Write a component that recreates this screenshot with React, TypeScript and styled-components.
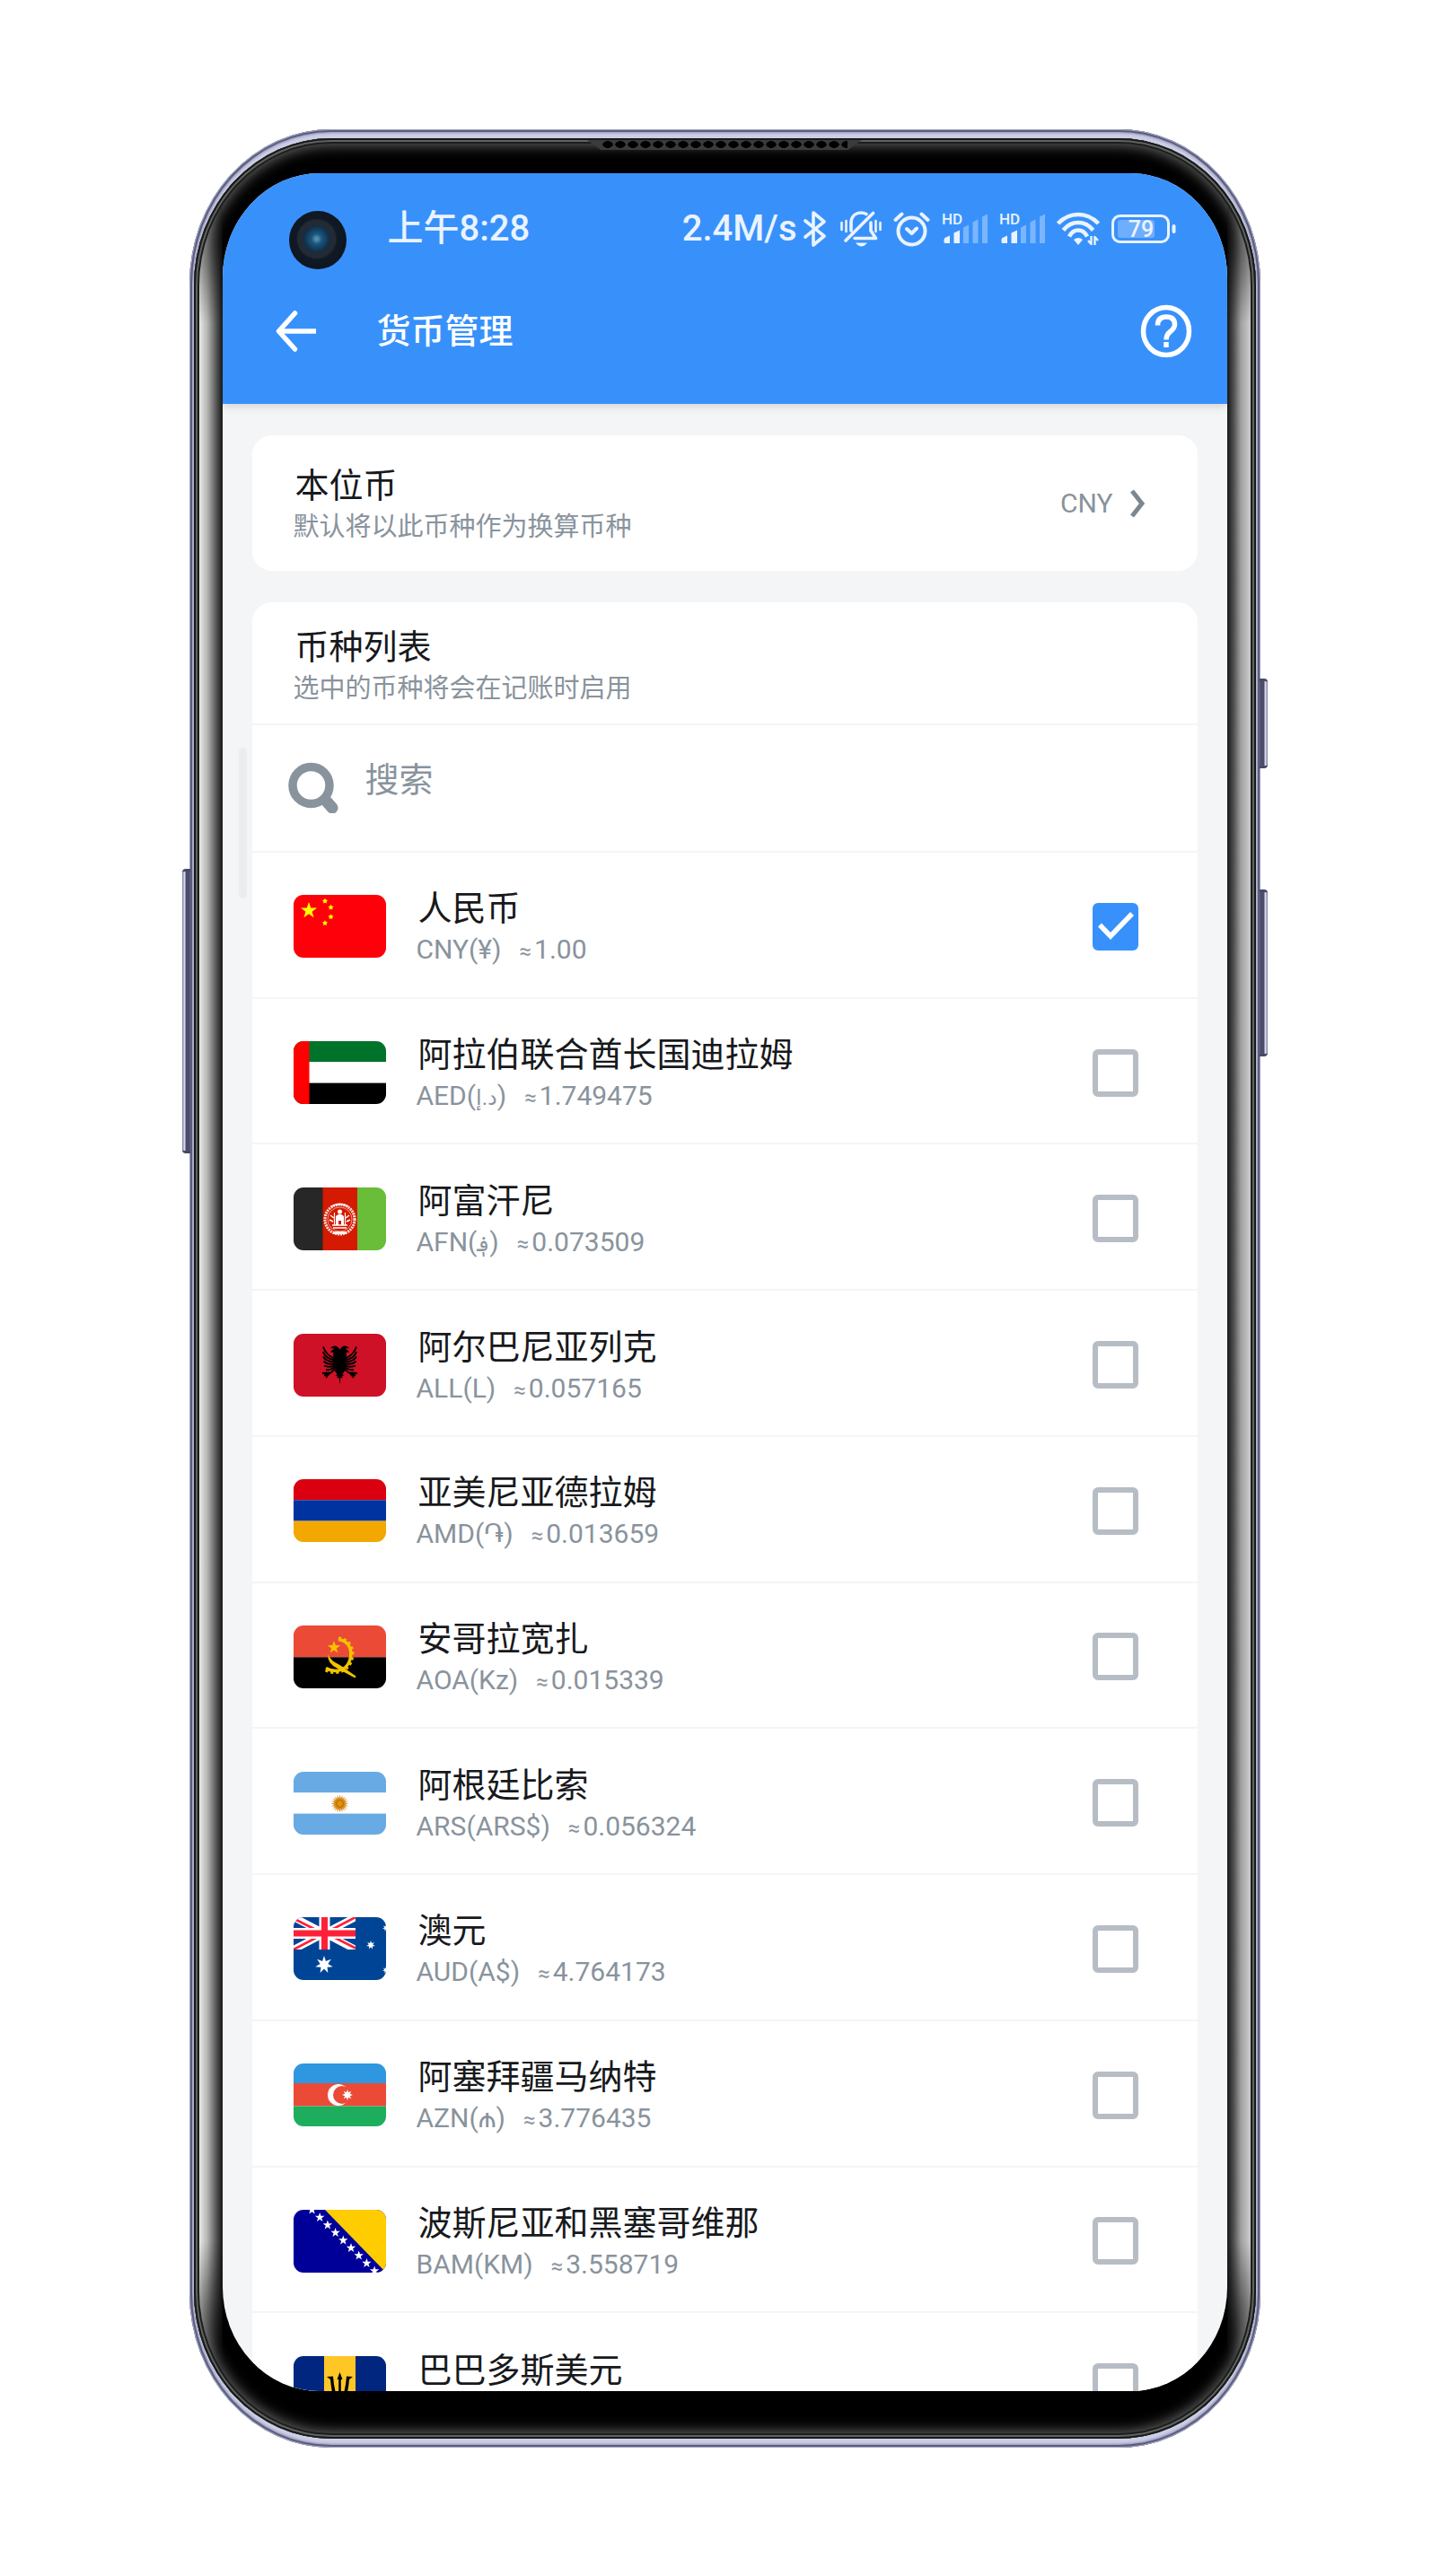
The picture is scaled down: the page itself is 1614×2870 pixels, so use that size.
import React, { useState } from 'react';
import styled, { createGlobalStyle, css } from 'styled-components';

const color = {
  primary: '#3891fb',
  page: '#f4f5f7',
  line: '#f4f5f6',
  ink: '#17191c',
  muted: '#89939d',
  box: '#b7bdc4',
  status: '#eaf3ff',
};

const GlobalStyle = createGlobalStyle`
  *, *::before, *::after { box-sizing: border-box; }
  body {
    margin: 0;
    background: #fff;
    font-family: Roboto, 'Noto Sans CJK SC', 'DejaVu Sans', sans-serif;
    color: ${color.ink};
  }
  h1, h2, p, ul { margin: 0; padding: 0; font-weight: 400; }
  ul { list-style: none; }
`;

/* ---------- device ---------- */

const Stage = styled.div`
  display: flex;
  justify-content: center;
  padding: 144px 24px 143px;
`;

const Device = styled.div`
  position: relative;
  display: flex;
  width: 100%;
  max-width: 1193px;
  aspect-ratio: 1193 / 2583;
  padding: 10px 5px;
  border-radius: 158px / 172px;
  background: #cdcee6;
  box-shadow: inset 0 0 0 1px #a3a5c2, inset 0 0 0 3px #5b5d7e, inset 0 0 3px 4px #8d8fae;
`;

const Glass = styled.div`
  position: relative;
  display: flex;
  flex: 1;
  min-width: 0;
  padding: 39px 32px 53px;
  border-radius: 153px / 164px;
  background: #000;
  box-shadow: inset 0 0 0 2px #18191b, inset 0 0 0 4px #5f635f, inset 0 0 0 6px #1c1d1d, inset 0 0 16px 7px #6e6f6d;
`;

const edge = css`
  content: '';
  position: absolute;
  top: 40px;
  bottom: 64px;
  width: 26px;
  mask-image: linear-gradient(transparent, #000 160px, #000 calc(100% - 150px), transparent);
`;

const Edges = styled.div`
  position: absolute;
  inset: 6px;
  overflow: hidden;
  border-radius: 147px / 158px;
  &::before {
    ${edge}
    left: 0;
    background: linear-gradient(90deg, #e9e9e6, #b4b4b2 35%, #5c5c5c 70%, #161616);
  }
  &::after {
    ${edge}
    right: 0;
    background: linear-gradient(270deg, #cdcdcd, #a3a3a3 40%, #565656 70%, #161616);
  }
`;

const Speaker = styled.div`
  position: absolute;
  z-index: 1;
  top: 2px;
  left: 50%;
  width: 306px;
  height: 11px;
  transform: translateX(-50%);
  padding: 1px 16px;
  background: #3a3b3b;
  clip-path: polygon(0 0, 100% 0, 95% 100%, 5% 100%);
  &::before {
    content: '';
    display: block;
    height: 8px;
    background: radial-gradient(ellipse 6px 4px at center, #000 90%, transparent) 0 0 / 14px 8px;
  }
`;

const SideKey = styled.span<{ $side: 'left' | 'right'; $top: number; $height: number }>`
  position: absolute;
  ${(p) => p.$side}: -8px;
  top: ${(p) => p.$top}px;
  width: 9px;
  height: ${(p) => p.$height}px;
  border-radius: ${(p) => (p.$side === 'left' ? '4px 0 0 4px' : '0 4px 4px 0')};
  background: linear-gradient(
    ${(p) => (p.$side === 'left' ? '90deg' : '270deg')},
    #8d8fae 0 1px, #dadbf0 2px 3px, #4b4c69 4px 8px, #666887
  );
  border-block: 3px solid #474866;
`;

const Screen = styled.div`
  position: relative;
  flex: 1;
  min-width: 0;
  overflow: hidden;
  border-radius: 108px / 116px;
  background: ${color.page};
`;

const Camera = styled.span`
  position: absolute;
  top: 42px;
  left: 74px;
  width: 64px;
  height: 65px;
  border-radius: 50%;
  background: radial-gradient(circle at 48% 48%, #4f8fb0 0 3%, #1d567c 12%, #0e2f4a 30%, #222a35 32% 44%, #101a26 48%, #0a1018 100%);
`;

const ScrollThumb = styled.span`
  position: absolute;
  top: 640px;
  left: 18px;
  width: 9px;
  height: 168px;
  border-radius: 5px;
  background: #ebeded;
`;

/* ---------- header ---------- */

const Header = styled.header`
  position: relative;
  padding-bottom: 29px;
  background: ${color.primary};
  box-shadow: 0 2px 10px rgba(0, 0, 0, 0.16);
`;

const StatusBar = styled.div`
  display: flex;
  align-items: center;
  justify-content: space-between;
  height: 124px;
  padding: 0 57px 0 184px;
  color: ${color.status};
  font-size: 40px;
  font-weight: 500;
  line-height: 48px;
`;

const StatusIcons = styled.div`
  display: flex;
  align-items: center;
  gap: 13px;
  svg { display: block; flex: none; overflow: visible; }
`;

const Speed = styled.span`
  display: flex;
  align-items: center;
  gap: 6px;
  margin-right: 3px;
`;

const AppBar = styled.div`
  display: flex;
  align-items: center;
  height: 104px;
  padding: 0 36px 0 50px;
  color: #fff;
`;

const IconButton = styled.button`
  display: grid;
  place-items: center;
  width: 64px;
  height: 64px;
  padding: 0;
  border: 0;
  background: none;
  color: inherit;
`;

const Title = styled.h1`
  flex: 1;
  margin-left: 58px;
  font-size: 38px;
  font-weight: 500;
  line-height: 46px;
`;

/* ---------- cards ---------- */

const Content = styled.main`
  display: flex;
  flex-direction: column;
  gap: 35px;
  padding: 35px 33px 0;
`;

const Card = styled.section`
  border-radius: 22px;
  background: #fff;
`;

const BaseCurrency = styled.button`
  display: flex;
  align-items: center;
  justify-content: space-between;
  width: 100%;
  height: 151px;
  padding: 0 58px 0 46px;
  border: 0;
  border-radius: 22px;
  background: #fff;
  color: inherit;
  font: inherit;
  text-align: left;
`;

const BaseText = styled.div`
  padding-top: 6px;
`;

const Heading = styled.h2`
  padding-left: 2px;
  font-size: 38px;
  line-height: 46px;
`;

const Hint = styled.p`
  color: ${color.muted};
  font-size: 29px;
  line-height: 46px;
`;

const Value = styled.span`
  display: flex;
  align-items: center;
  gap: 18px;
  color: ${color.muted};
  font-size: 30px;
`;

const CardHead = styled.div`
  height: 137px;
  padding: 27px 46px 0;
  border-bottom: 2px solid ${color.line};
`;

const SearchBar = styled.label`
  display: flex;
  align-items: center;
  gap: 28px;
  height: 142px;
  padding: 0 40px 2px;
  border-bottom: 2px solid ${color.line};
  color: ${color.muted};
`;

const SearchInput = styled.input`
  flex: 1;
  min-width: 0;
  height: 64px;
  margin-bottom: 16px;
  padding: 0;
  border: 0;
  outline: 0;
  background: none;
  color: ${color.ink};
  font: inherit;
  font-size: 38px;
  &::placeholder { color: ${color.muted}; opacity: 1; }
`;

const List = styled.ul`
  display: grid;
  grid-auto-rows: 1fr;
  height: 1790px;
`;

const Row = styled.label`
  display: flex;
  align-items: center;
  height: 100%;
  padding: 4px 66px 0 46px;
  border-bottom: 2px solid ${color.line};
`;

const FlagFrame = styled.svg`
  flex: none;
  width: 103px;
  height: 70px;
  border-radius: 11px;
`;

const RowText = styled.span`
  display: flex;
  flex: 1;
  flex-direction: column;
  min-width: 0;
  margin-left: 34px;
  padding-top: 8px;
`;

const Name = styled.span`
  padding-left: 2px;
  font-size: 38px;
  line-height: 46px;
`;

const Detail = styled.span`
  display: flex;
  align-items: baseline;
  gap: 20px;
  min-height: 46px;
  color: ${color.muted};
  font-size: 30px;
  line-height: 46px;
  [lang='ar'] { font-size: 24px; }
`;

const Approx = styled.span`
  margin-right: 3px;
  font-size: 24px;
`;

const CheckWrap = styled.span`
  display: grid;
  flex: none;
  > * { grid-area: 1 / 1; }
  svg { pointer-events: none; }
`;

const Check = styled.input`
  appearance: none;
  width: 51px;
  height: 53px;
  margin: 0;
  border: 6px solid ${color.box};
  border-radius: 6px;
  background: #fff;
  &:checked {
    border-color: ${color.primary};
    background: ${color.primary};
  }
`;

/* ---------- status glyphs ---------- */

const stroke = { fill: 'none', stroke: 'currentColor', strokeLinecap: 'round', strokeLinejoin: 'round' } as const;

const Bluetooth = () => (
  <svg width="26" height="42" viewBox="0 0 26 42" {...stroke} strokeWidth="3.6">
    <path d="M3 12 24 29 12 39V3l12 10L3 30" />
  </svg>
);

const Muted = () => (
  <svg width="46" height="42" viewBox="0 0 46 42" {...stroke} strokeWidth="3.6">
    <path d="M6 34 36.500 3.500M12 23V13C13 6 18 3 23 3q3 0 6 1.500M34 14v9l5.500 8.500H16" />
    <path d="M1.500 14v8M6.500 12v12M39.500 12v12M44.500 14v8" strokeWidth="2.600" />
    <path d="M17 36.500h13q-3 4-6.500 4t-6.500-4Z" fill="currentColor" stroke="none" />
  </svg>
);

const Alarm = () => (
  <svg width="41" height="40" viewBox="0 0 41 40" {...stroke} strokeWidth="4">
    <circle cx="20.500" cy="22.500" r="15" />
    <path d="m15 20 5.500 5 5.500-5.500" />
    <path d="m2.500 10 7-6.500M38.500 10l-7-6.500" />
  </svg>
);

const Signal = () => (
  <svg width="51" height="44" viewBox="0 -4 51 44" fill="currentColor">
    <text x="0" y="13" fontSize="17" fontWeight="500">HD</text>
    <path d="M2.500 30q0-2 2-2.500l4.500-2V34H4q-1.500 0-1.500-1.500Z M13.500 22.500 20 19.500V34h-6.500Z" />
    <path d="M24 16.500 30 13.500V34h-6Z M34.500 10.500 40.500 7.500V34h-6Z M45 4.500 51 1.500V34h-6Z" opacity="0.380" />
  </svg>
);

const Wifi = () => (
  <svg width="48" height="38" viewBox="0 0 48 38" {...stroke} strokeWidth="4.600" strokeLinecap="butt">
    <path d="M1.500 13Q11 3 24 3t22.500 10M7.500 20.500Q14 12 24 12t16.500 8.500M14 27.500Q17.500 20.500 24 20.500t10 7" />
    <path d="M19 31q5-4 10 0l-5 6Z" fill="currentColor" stroke="none" />
    <path d="M38.500 27v9l-3.500-4M42.500 37v-9l3.500 4" strokeWidth="2.400" />
  </svg>
);

const Battery = () => (
  <svg width="72" height="34" viewBox="0 0 72 34">
    <rect x="1.500" y="2.500" width="62" height="29" rx="8" fill="none" stroke="currentColor" strokeWidth="3" />
    <rect x="7" y="7" width="41" height="20" rx="3" fill="currentColor" opacity="0.300" />
    <rect x="67.500" y="12" width="4" height="10" rx="2" fill="currentColor" />
    <text x="33" y="26" textAnchor="middle" fontSize="25" fill="currentColor">79</text>
  </svg>
);

/* ---------- flags ---------- */

const starPoints = (cx: number, cy: number, r: number, tips = 5, inner = 0.4) =>
  Array.from({ length: tips * 2 }, (_, i) => {
    const a = (Math.PI * i) / tips - Math.PI / 2;
    const d = i % 2 ? r * inner : r;
    return `${(cx + d * Math.cos(a)).toFixed(2)},${(cy + d * Math.sin(a)).toFixed(2)}`;
  }).join(' ');

type StarProps = { x: number; y: number; r: number; tips?: number; inner?: number; fill?: string };
const Star = ({ x, y, r, tips, inner, fill = '#fff' }: StarProps) => (
  <polygon points={starPoints(x, y, r, tips, inner)} fill={fill} />
);

const Bands = ({ colors, stops = [0, 23.3, 46.6, 70] }: { colors: string[]; stops?: number[] }) => (
  <>
    {colors.map((c, i) => (
      <rect key={i} y={stops[i]} width="103" height={stops[i + 1] - stops[i]} fill={c} />
    ))}
  </>
);

const flags: Record<string, React.ReactNode> = {
  CNY: (
    <>
      <rect width="103" height="70" fill="#fe0009" />
      <Star x={17} y={17.5} r={9.5} fill="#ffff00" />
      {[[35, 7], [41.5, 14], [41.5, 24.5], [35, 31.5]].map(([x, y]) => (
        <Star key={y} x={x} y={y} r={3.2} inner={0.55} fill="#ffff00" />
      ))}
    </>
  ),
  AED: (
    <>
      <Bands colors={['#00732a', '#fff', '#000']} />
      <rect width="17.500" height="70" fill="#fe0000" />
    </>
  ),
  AFN: (
    <>
      <rect width="33" height="70" fill="#272727" />
      <rect x="32.500" width="39" height="70" fill="#d41a00" />
      <rect x="71" width="32" height="70" fill="#69bd38" />
      <g fill="none" stroke="#fff">
        <circle cx="51.500" cy="35.500" r="16.500" strokeWidth="3.200" strokeDasharray="2 0.900" opacity="0.850" />
        <circle cx="51.500" cy="35.500" r="13.500" strokeWidth="0.800" opacity="0.700" />
        <path d="M43 42h17M44 45h15M41 31l4 3M62 31l-4 3M40 36l4 2M63 36l-4 2" strokeWidth="1.500" />
        <path d="M45.500 42V28M57.500 42V28" strokeWidth="1.200" />
        <path d="M42 21q9.500-5 19 0" strokeWidth="1.400" />
      </g>
      <path d="M47 42V32q4.500-5 9 0v10h-3v-5h-3v5Z" fill="#fff" />
      <circle cx="51.500" cy="27" r="2.500" fill="#fff" />
      <path d="M44 49h15v3H44Z" fill="#fff" opacity="0.900" />
    </>
  ),
  ALL: (
    <>
      <rect width="103" height="70" fill="#ce1126" />
      {['', 'matrix(-1 0 0 1 103 0)'].map((side) => (
        <g key={side} transform={side || undefined}>
          <path
            d="M52 19q-2-5.500-6.500-5.500-3 0-4.500 2.800 3-.8 4 .7-2.500.8-4 3.500l3.500.2q-1 3 .5 6.300v13q2 3 3.500 5l-2 2 2.500-.5-.5 3 2-1 1.500 7.500Z"
            fill="#000"
          />
          <path
            d="M46 27.500Q36 24 33 14.500M46 29.500Q35 27.500 33 20M46 31.500Q36 31 33 25.500M46 33.500Q37 34.500 33.500 30.500M46 35.500Q39 38 34 35.500M46.500 37Q41 41 36 40M47 38Q43 44 34 46.500M41 43l-5 6M40 43.500l-8 .5"
            fill="none"
            stroke="#000"
            strokeWidth="1.900"
          />
        </g>
      ))}
    </>
  ),
  AMD: <Bands colors={['#da0010', '#0033a0', '#f2a800']} />,
  AOA: (
    <>
      <Bands colors={['#eb4b36', '#000']} stops={[0, 35.3, 70]} />
      <g fill="none" stroke="#f3c300">
        <path d="M50 15.500C61 17 65 26 63.500 35 62 44 56 50 47 50.500q-6 0-11-3" strokeWidth="3.500" />
        <path d="M50 14C62 15 67.500 25 65.500 36 63.500 46 56 52.500 46 52.500q-6 0-11-3" strokeWidth="3" strokeDasharray="3 3" />
      </g>
      <path d="M38.500 32q2 7 13 12l18 12.500-1 2L49 48Q37 42 38.500 32Z" fill="#f3c300" />
      <Star x={45} y={24.5} r={7.5} fill="#f3c300" />
    </>
  ),
  ARS: (
    <>
      <Bands colors={['#67aae4', '#fff', '#67aae4']} />
      <Star x={51.5} y={35.5} r={10} tips={20} inner={0.65} fill="#d9a45c" />
      <circle cx="51.500" cy="35.500" r="6.500" fill="#e08f0c" />
      <circle cx="51.500" cy="35.500" r="4" fill="none" stroke="#a8650e" strokeWidth="1" />
    </>
  ),
  AUD: (
    <>
      <rect width="103" height="70" fill="#004595" />
      <svg width="69" height="36" viewBox="0 0 69 36">
        <path d="M0 0 69 36M69 0 0 36" stroke="#fff" strokeWidth="8" />
        <path d="M0 1.500 34.500 19M69 34.500 34.500 17M69 0 34.500 18M0 36l34.500-18" stroke="#fe2038" strokeWidth="2.600" />
        <path d="M34.500 0v36M0 18h69" stroke="#fff" strokeWidth="12" />
        <path d="M34.500 0v36M0 18h69" stroke="#fe2038" strokeWidth="7" />
      </svg>
      <Star x={34} y={53} r={10} tips={7} inner={0.45} />
      <Star x={86} y={31} r={5} tips={7} inner={0.45} />
      <Star x={103} y={12} r={4} tips={7} inner={0.45} />
      <Star x={103} y={59} r={4} tips={7} inner={0.45} />
    </>
  ),
  AZN: (
    <>
      <Bands colors={['#2f97df', '#eb4b36', '#1dae5d']} stops={[0, 22, 47.5, 70]} />
      <circle cx="50" cy="35" r="12" fill="#fff" />
      <circle cx="54" cy="35" r="10" fill="#eb4b36" />
      <Star x={60} y={35} r={6} tips={8} inner={0.5} />
    </>
  ),
  BAM: (
    <>
      <rect width="103" height="70" fill="#000099" />
      <path d="M35 0h68v70Z" fill="#ffcc00" />
      {Array.from({ length: 9 }, (_, i) => (
        <Star key={i} x={20.5 + i * 8.7} y={i * 8.5} r={5.5} />
      ))}
    </>
  ),
  BBD: (
    <>
      <rect width="103" height="70" fill="#00267f" />
      <rect x="34" width="35" height="70" fill="#ffc726" />
      <path d="M51.500 18 48.500 26h1.700v20h2.600V26h1.700ZM37 23l4 3q1 12 3.500 20h4Q45 36 44 22.500ZM66 23l-4 3q-1 12-3.500 20h-4q3.500-10 4.500-23.500Z" fill="#000" />
    </>
  ),
};

/* ---------- data ---------- */

type Currency = { code: string; name: string; symbol?: string; rate?: string; lang?: string };

const currencies: Currency[] = [
  { code: 'CNY', name: '人民币', symbol: '¥', rate: '1.00' },
  { code: 'AED', name: '阿拉伯联合酋长国迪拉姆', symbol: 'د.إ', rate: '1.749475', lang: 'ar' },
  { code: 'AFN', name: '阿富汗尼', symbol: '؋', rate: '0.073509', lang: 'ar' },
  { code: 'ALL', name: '阿尔巴尼亚列克', symbol: 'L', rate: '0.057165' },
  { code: 'AMD', name: '亚美尼亚德拉姆', symbol: '֏', rate: '0.013659' },
  { code: 'AOA', name: '安哥拉宽扎', symbol: 'Kz', rate: '0.015339' },
  { code: 'ARS', name: '阿根廷比索', symbol: 'ARS$', rate: '0.056324' },
  { code: 'AUD', name: '澳元', symbol: 'A$', rate: '4.764173' },
  { code: 'AZN', name: '阿塞拜疆马纳特', symbol: '₼', rate: '3.776435' },
  { code: 'BAM', name: '波斯尼亚和黑塞哥维那', symbol: 'KM', rate: '3.558719' },
  { code: 'BBD', name: '巴巴多斯美元' },
];

export default function App() {
  const [enabled, setEnabled] = useState<string[]>(['CNY']);
  const toggle = (code: string) =>
    setEnabled((list) => (list.includes(code) ? list.filter((c) => c !== code) : [...list, code]));

  return (
    <>
      <GlobalStyle />
      <Stage>
        <Device>
          <SideKey $side="left" $top={824} $height={317} />
          <SideKey $side="right" $top={612} $height={100} />
          <SideKey $side="right" $top={847} $height={186} />
          <Glass>
            <Edges />
            <Speaker />
            <Screen>
              <Header>
                <StatusBar>
                  <span>上午8:28</span>
                  <StatusIcons>
                    <Speed>
                      2.4M/s
                      <Bluetooth />
                    </Speed>
                    <Muted />
                    <Alarm />
                    <Signal />
                    <Signal />
                    <Wifi />
                    <Battery />
                  </StatusIcons>
                </StatusBar>
                <AppBar>
                  <IconButton aria-label="返回">
                    <svg width="46" height="48" viewBox="0 0 46 48" {...stroke} strokeWidth="5.500">
                      <path d="M21.500 4 3.500 24l18 20" />
                      <path d="M4 24h41" strokeLinecap="butt" />
                    </svg>
                  </IconButton>
                  <Title>货币管理</Title>
                  <IconButton aria-label="帮助">
                    <svg width="58" height="60" viewBox="0 0 58 60" {...stroke} strokeWidth="5.500" strokeLinecap="butt">
                      <ellipse cx="29" cy="30" rx="25.500" ry="26.500" />
                      <path d="M19.500 23.500q0-9.500 9.500-9.500 9.500 0 9.500 8.500 0 4-5 8Q29 34 29 39.500M29 42v6" />
                    </svg>
                  </IconButton>
                </AppBar>
              </Header>
              <Content>
                <Card>
                  <BaseCurrency>
                    <BaseText>
                      <Heading as="div">本位币</Heading>
                      <Hint as="div">默认将以此币种作为换算币种</Hint>
                    </BaseText>
                    <Value>
                      CNY
                      <svg width="18" height="34" viewBox="0 0 18 34" fill="none" stroke="#7d8790" strokeWidth="5">
                        <path d="m3 3 11 14L3 31" />
                      </svg>
                    </Value>
                  </BaseCurrency>
                </Card>
                <Card>
                  <CardHead>
                    <Heading>币种列表</Heading>
                    <Hint>选中的币种将会在记账时启用</Hint>
                  </CardHead>
                  <SearchBar>
                    <svg width="58" height="58" viewBox="0 0 58 58" {...stroke}>
                      <circle cx="25.500" cy="27" r="20.500" strokeWidth="9.500" />
                      <path d="m42 44 7 8" strokeWidth="13" />
                    </svg>
                    <SearchInput type="text" placeholder="搜索" aria-label="搜索" />
                  </SearchBar>
                  <List>
                    {currencies.map((c) => (
                      <li key={c.code}>
                        <Row>
                          <FlagFrame viewBox="0 0 103 70" aria-hidden="true">{flags[c.code]}</FlagFrame>
                          <RowText>
                            <Name>{c.name}</Name>
                            <Detail>
                              {c.symbol && (
                                <span>
                                  {c.code}(<bdi lang={c.lang}>{c.symbol}</bdi>)
                                </span>
                              )}
                              {c.rate && (
                                <span>
                                  <Approx>≈</Approx>
                                  {c.rate}
                                </span>
                              )}
                            </Detail>
                          </RowText>
                          <CheckWrap>
                            <Check type="checkbox" checked={enabled.includes(c.code)} onChange={() => toggle(c.code)} />
                            {enabled.includes(c.code) && (
                              <svg width="51" height="53" viewBox="0 0 51 53" fill="none" stroke="#fff" strokeWidth="5.500">
                                <path d="m8 24.500 12 12.500 24-25" />
                              </svg>
                            )}
                          </CheckWrap>
                        </Row>
                      </li>
                    ))}
                  </List>
                </Card>
              </Content>
              <Camera />
              <ScrollThumb />
            </Screen>
          </Glass>
        </Device>
      </Stage>
    </>
  );
}
